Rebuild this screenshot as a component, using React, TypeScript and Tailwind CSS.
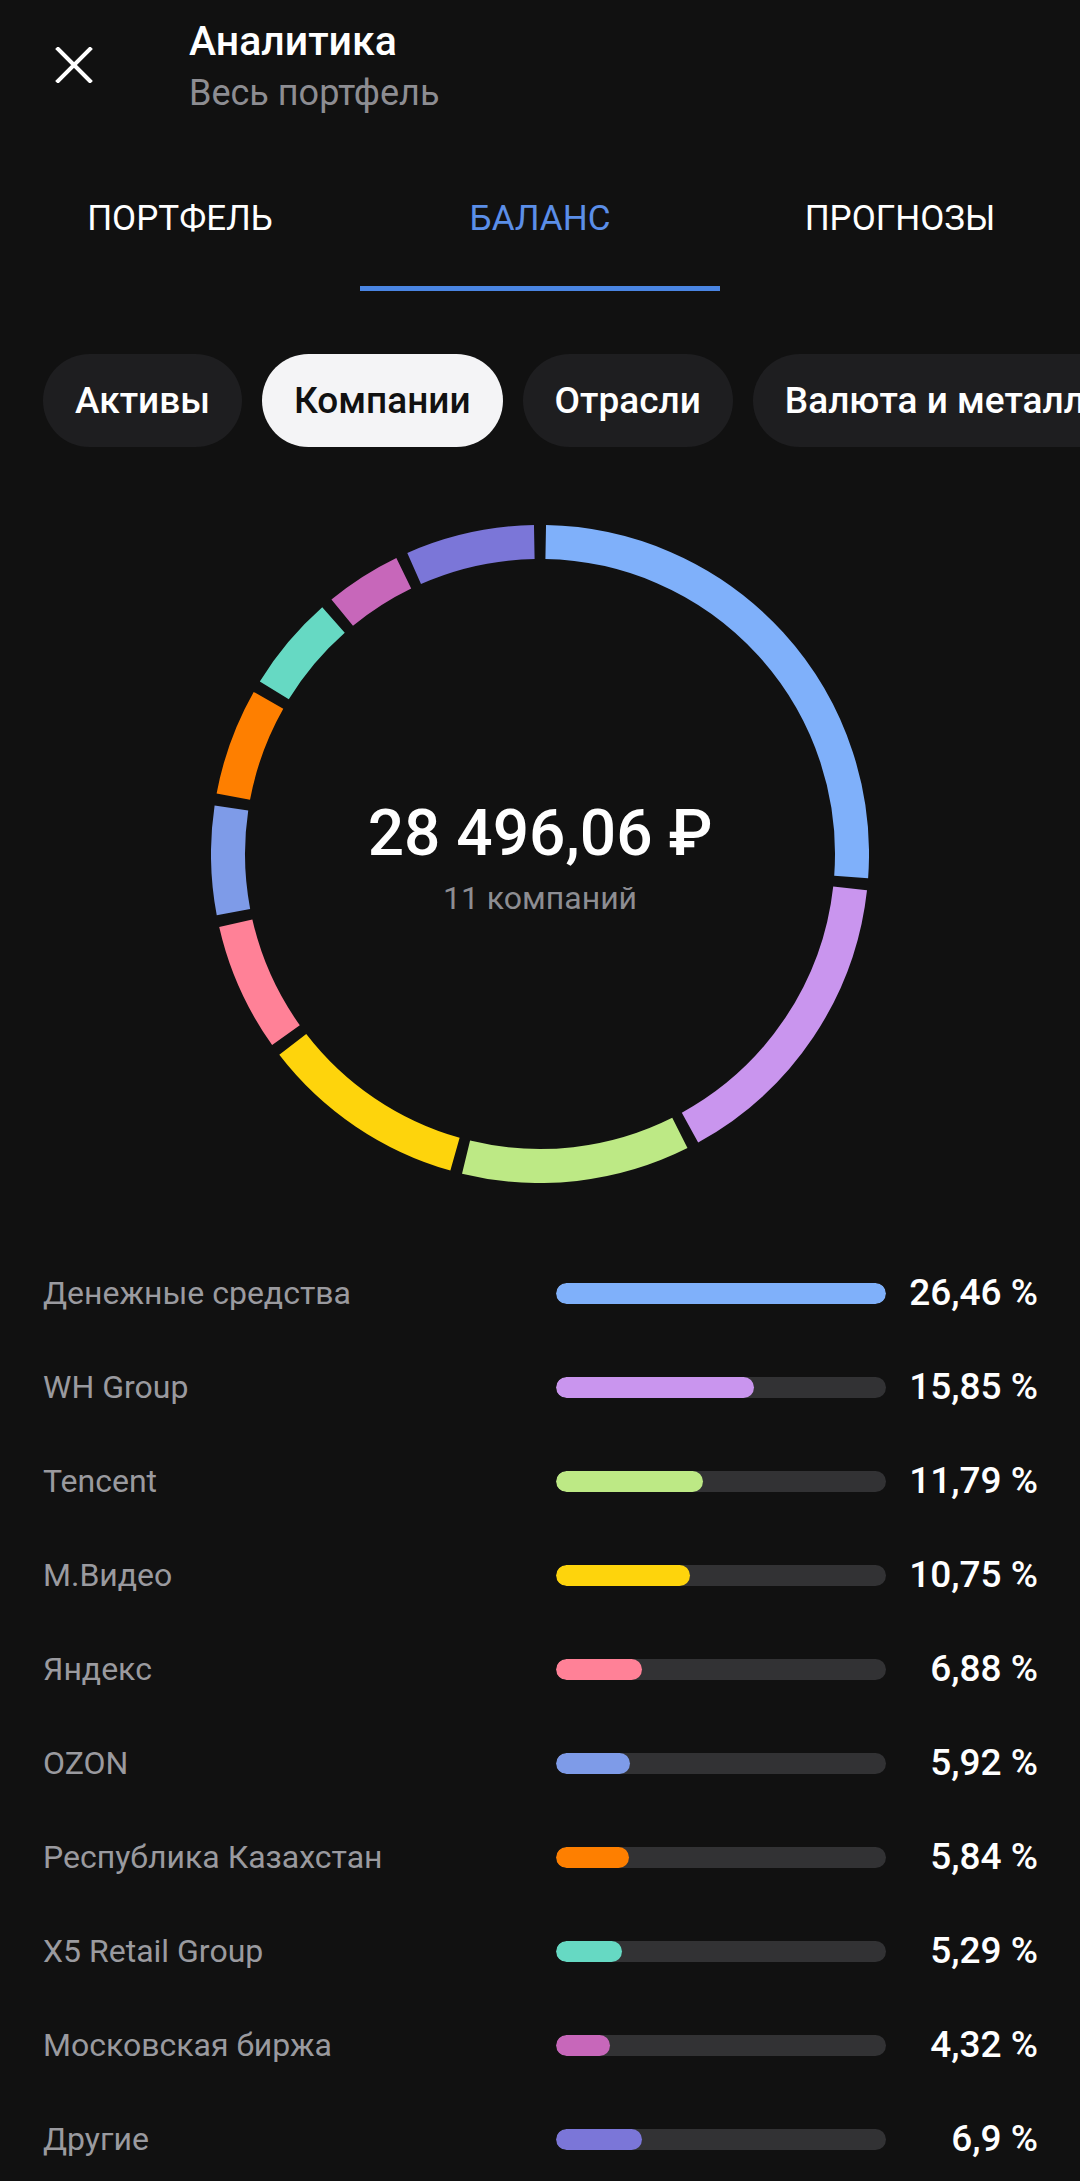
import React from "react";

type Item = { name: string; pct: number; label: string; color: string };

const items: Item[] = [
    { name: "Денежные средства", pct: 26.46, label: "26,46 %", color: "#7fb0fa" },
    { name: "WH Group", pct: 15.85, label: "15,85 %", color: "#c995ee" },
    { name: "Tencent", pct: 11.79, label: "11,79 %", color: "#bde985" },
    { name: "М.Видео", pct: 10.75, label: "10,75 %", color: "#fed40c" },
    { name: "Яндекс", pct: 6.88, label: "6,88 %", color: "#ff8197" },
    { name: "OZON", pct: 5.92, label: "5,92 %", color: "#7e9be8" },
    { name: "Республика Казахстан", pct: 5.84, label: "5,84 %", color: "#fe7f00" },
    { name: "X5 Retail Group", pct: 5.29, label: "5,29 %", color: "#66d9c3" },
    { name: "Московская биржа", pct: 4.32, label: "4,32 %", color: "#c767ba" },
    { name: "Другие", pct: 6.9, label: "6,9 %", color: "#7b76d8" },
];

const chips = ["Активы", "Компании", "Отрасли", "Валюта и металлы"];
const tabs = ["ПОРТФЕЛЬ", "БАЛАНС", "ПРОГНОЗЫ"];

const polar = (cx: number, cy: number, r: number, deg: number) => {
    const a = ((deg - 90) * Math.PI) / 180;
    return [cx + r * Math.cos(a), cy + r * Math.sin(a)];
};

const Donut = () => {
    const size = 658;
    const c = size / 2;
    const r = 312;
    const gap = 2.1;
    const total = items.reduce((s, i) => s + i.pct, 0);
    let acc = 0;
    return (
        <svg width={size} height={size} viewBox={`0 0 ${size} ${size}`}>
            {items.map((it) => {
                const start = (acc / total) * 360 + gap / 2;
                acc += it.pct;
                const end = (acc / total) * 360 - gap / 2;
                const [x1, y1] = polar(c, c, r, start);
                const [x2, y2] = polar(c, c, r, end);
                const large = end - start > 180 ? 1 : 0;
                return (
                    <path
                        key={it.name}
                        d={`M ${x1} ${y1} A ${r} ${r} 0 ${large} 1 ${x2} ${y2}`}
                        stroke={it.color}
                        strokeWidth={34}
                        fill="none"
                    />
                );
            })}
        </svg>
    );
};

export default function App() {
    const max = Math.max(...items.map((i) => i.pct));
    return (
        <div className="w-[1080px] h-[2181px] overflow-hidden bg-[#111111] text-white font-['Roboto','Noto_Sans',sans-serif]">
            {/* header */}
            <div className="flex items-start pl-[55px] pt-[18px]">
                <div className="w-[134px] pt-[29px]">
                    <svg width="38" height="36" viewBox="0 0 38 36">
                        <path d="M3 2 L35 34 M35 2 L3 34" stroke="#ffffff" strokeWidth="4" strokeLinecap="square" />
                    </svg>
                </div>
                <div className="flex flex-col">
                    <span className="text-[41px] leading-[47px] font-medium">Аналитика</span>
                    <span className="mt-[6px] text-[36px] leading-[44px] text-[#8d8d92]">Весь портфель</span>
                </div>
            </div>

            {/* tabs */}
            <div className="mt-[83px] grid grid-cols-3">
                {tabs.map((t, i) => (
                    <div key={t} className="flex flex-col items-center">
                        <span className={`text-[35px] leading-[42px] ${i === 1 ? "text-[#5b8ee8]" : "text-white"}`}>{t}</span>
                        <div className={`mt-[46px] h-[5px] w-full ${i === 1 ? "bg-[#4a85e3]" : "bg-transparent"}`} />
                    </div>
                ))}
            </div>

            {/* chips */}
            <div className="mt-[63px] flex gap-[20px] pl-[43px] whitespace-nowrap overflow-hidden">
                {chips.map((c, i) => (
                    <div
                        key={c}
                        className={`h-[93px] shrink-0 px-[32px] rounded-full flex items-center text-[37px] font-medium ${
                            i === 1 ? "bg-[#f4f4f6] text-[#111111]" : "bg-[#1e1e20] text-white"
                        }`}
                    >
                        {c}
                    </div>
                ))}
            </div>

            {/* donut */}
            <div className="mt-[78px] flex justify-center">
                <div className="relative w-[658px] h-[658px]">
                    <Donut />
                    <div className="absolute inset-0 flex flex-col items-center justify-center pt-[8px]">
                        <span className="text-[64px] leading-[70px] font-medium">28 496,06 ₽</span>
                        <span className="mt-[10px] text-[32px] leading-[38px] text-[#8d8d92]">11 компаний</span>
                    </div>
                </div>
            </div>

            {/* list */}
            <div className="mt-[63px] flex flex-col pl-[43px] pr-[42px]">
                {items.map((it) => (
                    <div key={it.name} className="h-[94px] flex items-center">
                        <span className="flex-1 text-[32px] text-[#9a9a9f]">{it.name}</span>
                        <div className="w-[330px] h-[21px] rounded-full bg-[#323234] overflow-hidden">
                            <div className="h-full rounded-full" style={{ width: `${(it.pct / max) * 100}%`, background: it.color }} />
                        </div>
                        <span className="w-[152px] text-right text-[37px] font-medium">{it.label}</span>
                    </div>
                ))}
            </div>
        </div>
    );
}
